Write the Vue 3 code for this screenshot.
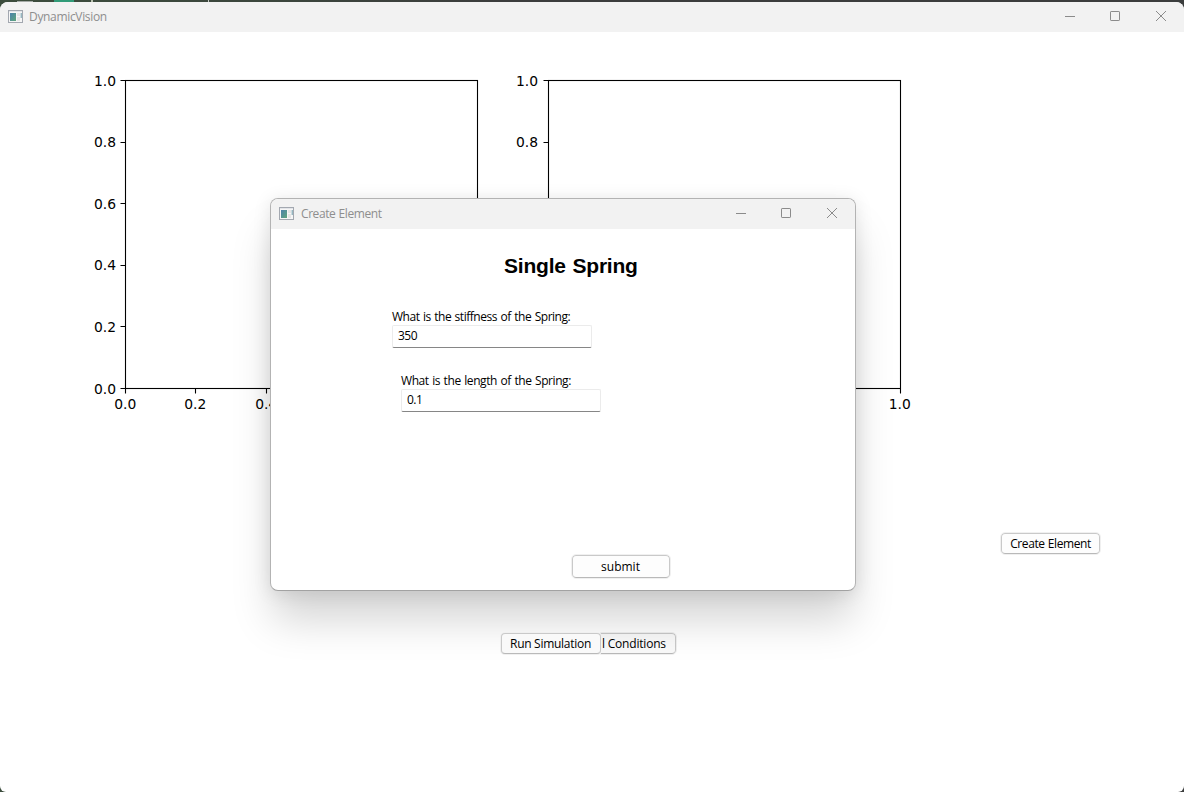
<script setup>
const ticks = [0, 0.2, 0.4, 0.6, 0.8, 1]
// Labels the dialog fully covers are left out of each axis.
const plots = [
  { left: 125.5, labelX: 116, xLabels: [0, 0.2, 0.4], yLabels: ticks },
  { left: 548.5, labelX: 538, xLabels: [1], yLabels: [0.8, 1] },
]
const tickX = (left, t) => Math.round(left - 0.5 + t * 352) + 0.5
const tickY = (t) => Math.round(388 - t * 308) + 0.5
const labelY = (t) => Math.floor(388 - t * 308) + 5.8
const fields = [
  { label: 'What is the stiffness of the Spring:', value: '350', kind: 'stiffness' },
  { label: 'What is the length of the Spring:', value: '0.1', kind: 'length' },
]
</script>

<template>
  <div class="desktop">
    <i class="patch pale"></i><i class="patch green"></i><i class="patch spot"></i><i class="patch line"></i>
    <main class="window">
      <header class="titlebar">
        <svg class="app-icon" width="15" height="13" viewBox="0 0 15 13">
          <defs>
            <linearGradient id="tile" x1="0" y1="0" x2="1" y2="1">
              <stop offset="0" stop-color="#4d82ac" /><stop offset="1" stop-color="#5fa67c" />
            </linearGradient>
          </defs>
          <rect x=".5" y=".5" width="14" height="12" fill="#f6f6f6" stroke="#a3a8b0" />
          <path d="M1 1.5H14" stroke="#e2e4e8" />
          <rect x="2" y="3" width="6" height="8" fill="url(#tile)" />
          <path d="M9 3h3v3H9zM9 7h3v4H9z" fill="#e5e5e5" />
          <path d="M13.2 3v5" stroke="#6c9caa" />
        </svg>
        <span class="title main-title">DynamicVision</span>
        <svg class="controls" width="104" height="12" viewBox="0 0 104 12" fill="none" stroke="#8b8b8b">
          <path d="M1 6.5H11" /><rect x="46.5" y="1.5" width="9" height="9" rx=".6" />
          <path d="M92 1l10 10M102 1L92 11" />
        </svg>
      </header>
      <svg class="figure" width="1184" height="470" viewBox="0 32 1184 470">
        <g v-for="p in plots" :key="p.left">
          <rect :x="p.left" y="80.5" width="352" height="308" fill="none" stroke="#000" stroke-width="1.1" />
          <path v-for="t in ticks" :key="t" :d="`M${p.left - 5} ${tickY(t)}h5M${tickX(p.left, t)} 388.5v5`" stroke="#000" stroke-width="1.1" />
          <text v-for="t in p.yLabels" :key="'y' + t" :x="p.labelX" :y="labelY(t)" text-anchor="end">{{ t.toFixed(1) }}</text>
          <text v-for="t in p.xLabels" :key="'x' + t" :x="tickX(p.left, t) - (p.left > 500 ? 0.8 : 0.2)" y="409" text-anchor="middle">{{ t.toFixed(1) }}</text>
        </g>
      </svg>
      <div class="create-row"><button class="btn create">Create Element</button></div>
      <div class="run-row">
        <button class="btn run">Run Simulation</button>
        <button class="btn conditions">l Conditions</button>
      </div>
    </main>

    <section class="dialog">
      <header class="titlebar">
        <svg class="app-icon" width="15" height="13" viewBox="0 0 15 13">
          <rect x=".5" y=".5" width="14" height="12" fill="#f6f6f6" stroke="#a3a8b0" />
          <path d="M1 1.5H14" stroke="#e2e4e8" />
          <rect x="2" y="3" width="6" height="8" fill="url(#tile)" />
          <path d="M9 3h3v3H9zM9 7h3v4H9z" fill="#e5e5e5" />
          <path d="M13.2 3v5" stroke="#6c9caa" />
        </svg>
        <span class="title dialog-title">Create Element</span>
        <svg class="controls" width="104" height="12" viewBox="0 0 104 12" fill="none" stroke="#8b8b8b">
          <path d="M1 6.5H11" /><rect x="46.5" y="1.5" width="9" height="9" rx=".6" />
          <path d="M92 1l10 10M102 1L92 11" />
        </svg>
      </header>
      <h1>Single Spring</h1>
      <label v-for="f in fields" :key="f.kind" class="field" :class="f.kind">
        <span>{{ f.label }}</span>
        <input :value="f.value" />
      </label>
      <button class="btn submit">submit</button>
    </section>
  </div>
</template>

<style>
body { overflow: hidden; }
</style>
<style scoped>
* { box-sizing: border-box; }
.desktop { position: relative; width: 1184px; height: 792px; padding-top: 2px; background: linear-gradient(90deg, #3c4d3d 0, #3c463d 270px, #3b3d3d 500px); font-family: "Open Sans", sans-serif; font-size: 12px; color: #000; }
.patch { position: absolute; top: 0; height: 2px; }
.pale { left: 17px; width: 16px; top: 1px; height: 1px; background: #a4aaa6; }
.green { left: 54px; width: 20px; background: #319b78; }
.spot { left: 91px; width: 2px; background: #b9c2b0; }
.line { left: 208px; width: 1px; background: #c7cbc7; }
.window { position: relative; height: 790px; display: flex; flex-direction: column; background: #fff; border-radius: 8px 8px 6px 6px; overflow: hidden; }
.titlebar { height: 30px; flex: none; display: flex; align-items: flex-start; background: #f2f2f2; padding: 8px 16px 0 8px; }
.app-icon { flex: none; display: block; }
.title { margin: -1px 0 0 6px; line-height: 16px; color: #8e8e8e; white-space: nowrap; }
.main-title { letter-spacing: -.33px; }
.dialog-title { margin-left: 7px; letter-spacing: -.42px; word-spacing: .5px; }
.controls { margin-left: auto; display: block; }
.figure { display: block; flex: none; }
.figure text { font: 13.89px "DejaVu Sans", sans-serif; fill: #000; }
.create-row { margin: 31px 0 0 1001px; height: 21px; }
.run-row { display: flex; margin: 79px 0 0 501px; }
.btn { display: block; height: 21px; padding: 0; border: 1px solid #c9c9c9; border-bottom-color: #b9b9b9; border-radius: 4px; outline: 1px solid #f0f0f0; outline-offset: 0; background: #fdfdfd; color: #000; font: 12px/18px "Open Sans", sans-serif; white-space: nowrap; }
.create { width: 99px; letter-spacing: -.42px; word-spacing: .5px; }
.run { position: relative; z-index: 1; width: 100px; padding-right: 1px; letter-spacing: -.28px; outline: 0; box-shadow: -1px 0 #f0f0f0, 0 1px #f0f0f0, 0 -1px #f0f0f0; }
.run, .conditions { background: #f9f9f9; }
.conditions { width: 75px; letter-spacing: -.2px; border-left: 0; border-radius: 0 4px 4px 0; text-align: left; padding-left: 1px; }
.dialog { position: absolute; left: 270px; top: 198px; width: 586px; height: 393px; display: flex; flex-direction: column; align-items: flex-start; border: 1px solid #b3b3b3; border-bottom-color: #a2a2a2; border-radius: 8px; overflow: hidden; background: #fff; box-shadow: 0 32px 42px -3px rgba(0,0,0,.17), 0 2px 18px rgba(0,0,0,.1); }
.dialog .titlebar { align-self: stretch; }
h1 { margin: 24px 0 0 233px; font: bold 21px/26px "Liberation Sans", Arial, sans-serif; letter-spacing: -.2px; word-spacing: 1px; white-space: nowrap; }
.field { display: flex; flex-direction: column; width: 200px; }
.field span { height: 16px; line-height: 16px; white-space: nowrap; }
.field input { width: 200px; height: 23px; padding: 0 5px 2px; border: 1px solid #ebebeb; border-bottom: 1px solid #868686; border-radius: 2px; background: #fff; color: #000; font: 12px "Open Sans", sans-serif; letter-spacing: -.5px; outline: 0; }
.stiffness { margin: 30px 0 0 121px; }
.stiffness span { letter-spacing: -.47px; word-spacing: .8px; }
.length { margin: 25px 0 0 130px; }
.length span { letter-spacing: -.42px; word-spacing: .8px; }
.submit { width: 98px; height: 23px; margin: 143px 0 0 301px; padding-right: 1px; }
</style>
